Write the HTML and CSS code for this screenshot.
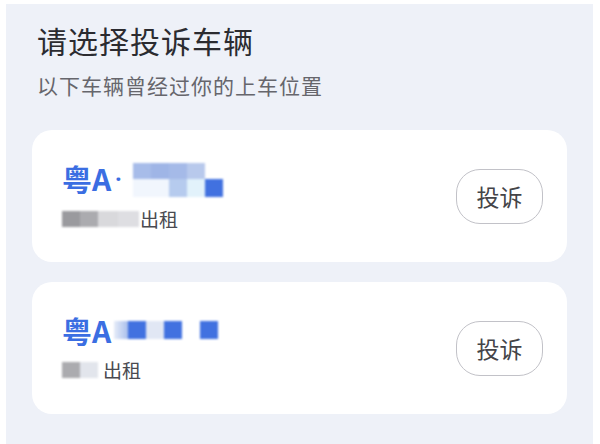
FILE: index.html
```html
<!DOCTYPE html>
<html lang="zh">
<head>
<meta charset="utf-8">
<link rel="stylesheet" href="styles.css">
</head>
<body>
<div class="panel">
  <h1 class="title">请选择投诉车辆</h1>
  <p class="subtitle">以下车辆曾经过你的上车位置</p>
  <div class="list">
    <div class="card">
      <div class="info">
        <div class="plate">粤A<span class="dot">·</span><span class="mosaic m1">
          <i class="c-a"></i><i class="c-b"></i><i class="c-c"></i><i class="c-d"></i><i class="c-w"></i>
          <i class="c-e"></i><i class="c-e"></i><i class="c-f"></i><i class="c-g"></i><i class="c-h"></i>
        </span></div>
        <div class="type"><span class="gray g1"><i class="k1"></i><i class="k2"></i><i class="k3"></i><i class="k4"></i></span>出租</div>
      </div>
      <button class="btn">投诉</button>
    </div>
    <div class="card">
      <div class="info">
        <div class="plate">粤A<span class="mosaic m2">
          <i class="c-l"></i><i class="c-h"></i><i class="c-x"></i><i class="c-h"></i><i class="c-w"></i><i class="c-h"></i>
        </span></div>
        <div class="type"><span class="gray g2"><i class="k2"></i><i class="k5"></i></span>出租</div>
      </div>
      <button class="btn">投诉</button>
    </div>
  </div>
</div>
</body>
</html>
```
FILE: styles.css
```css
* { box-sizing: border-box; }
html, body {
  margin: 0;
  background: #ffffff;
  font-family: "Noto Sans CJK SC", "Noto Sans", sans-serif;
}
.panel {
  margin: 4px 0 0 6px;
  width: 587px;
  height: 440px;
  background: #eef1f8;
  padding: 18px 26px 0 26px;
}
.title {
  margin: 0;
  padding-left: 5px;
  font-size: 30px;
  line-height: 36px;
  letter-spacing: 1px;
  font-weight: 400;
  color: #2b2b30;
}
.subtitle {
  margin: 13px 0 0;
  padding-left: 5px;
  font-size: 21px;
  line-height: 28px;
  letter-spacing: 1px;
  color: #66666c;
}
.list {
  margin-top: 31px;
  display: flex;
  flex-direction: column;
  gap: 20px;
}
.card {
  height: 132px;
  background: #ffffff;
  border-radius: 20px;
  display: flex;
  align-items: center;
  justify-content: space-between;
  padding: 0 24px 0 30px;
}
.info {
  display: flex;
  flex-direction: column;
  gap: 9px;
}
.plate {
  display: flex;
  align-items: center;
  font-size: 30px;
  line-height: 35px;
  font-weight: 700;
  color: #3b6ee2;
}
.dot {
  font-family: "Noto Sans", sans-serif;
  font-weight: 700;
  font-size: 22px;
  margin-left: 4px;
}
.mosaic {
  display: inline-grid;
  filter: blur(0.8px);
}
.mosaic i { display: block; }
.m1 {
  margin-left: 12px;
  grid-template-columns: repeat(5, 18px);
  grid-template-rows: 16px 18px;
  margin-top: 2px;
}
.m2 {
  margin-left: 3px;
  grid-template-columns: 14px repeat(5, 18px);
  grid-template-rows: 18px;
  margin-top: -2px;
}
.c-a { background: #a7bce9; }
.c-b { background: #9fb5e6; }
.c-c { background: #a5bae8; }
.c-d { background: #b8c9ec; }
.c-w { background: #ffffff; }
.c-e { background: #f1f6fd; }
.c-f { background: #b6cbee; }
.c-g { background: #e2f2fb; }
.c-h { background: #4171e0; }
.c-l { background: linear-gradient(90deg, #e6ecf8, #a9bfec); }
.c-x { background: #e1e7f4; }
.type {
  display: flex;
  align-items: center;
  font-size: 19px;
  line-height: 26px;
  color: #4a4a50;
}
.gray {
  display: inline-flex;
  height: 16px;
  filter: blur(0.8px);
}
.gray i { display: block; height: 16px; }
.g1 { margin-right: 1px; }
.g2 { margin-right: 5px; }
.k1 { width: 18px; background: #9a9a9e; }
.k2 { width: 18px; background: #ababaf; }
.k3 { width: 20px; background: #d9d9dc; }
.k4 { width: 21px; background: #dedee2; }
.k5 { width: 18px; background: #e2e5ec; }
.btn {
  width: 87px;
  height: 55px;
  border: 1.5px solid #c2c2c8;
  border-radius: 24px;
  background: #ffffff;
  font-family: "Noto Sans CJK SC", sans-serif;
  font-size: 23px;
  color: #444448;
  padding: 0;
}
```
